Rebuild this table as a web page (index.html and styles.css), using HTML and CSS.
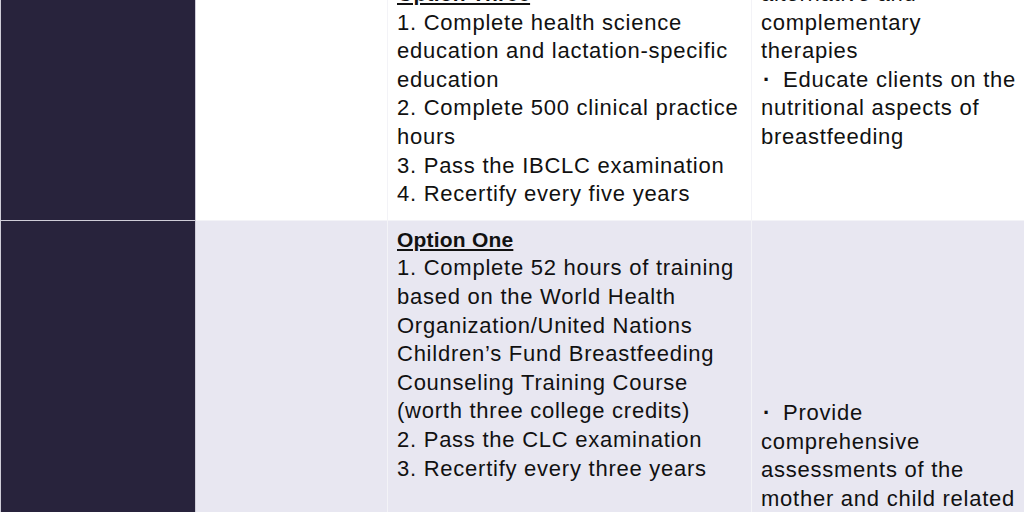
FILE: index.html
```html
<!DOCTYPE html>
<html lang="en">
<head>
<meta charset="utf-8">
<title>Lactation credentials</title>
<link rel="stylesheet" href="styles.css">
</head>
<body>
<table class="cred-table">
  <colgroup>
    <col class="col-label">
    <col class="col-name">
    <col class="col-req">
    <col class="col-scope">
  </colgroup>
  <tbody>
    <tr class="row row-light">
      <td class="cell cell-label"></td>
      <td class="cell cell-name"></td>
      <td class="cell cell-req">
        <div class="opt">Option Three</div>
        <div>1. Complete health science education and lactation-specific education</div>
        <div>2. Complete 500 clinical practice hours</div>
        <div>3. Pass the IBCLC examination</div>
        <div>4. Recertify every five years</div>
      </td>
      <td class="cell cell-scope">
        <div>alternative and complementary therapies</div>
        <div><span class="dot">·</span>Educate clients on the nutritional aspects of breastfeeding</div>
      </td>
    </tr>
    <tr class="row row-tint row-tall">
      <td class="cell cell-label"></td>
      <td class="cell cell-name"></td>
      <td class="cell cell-req">
        <div class="opt">Option One</div>
        <div>1. Complete 52 hours of training based on the World Health Organization/United Nations Children’s Fund Breastfeeding Counseling Training Course (worth three college credits)</div>
        <div>2. Pass the CLC examination</div>
        <div>3. Recertify every three years</div>
      </td>
      <td class="cell cell-scope cell-mid">
        <div><span class="dot">·</span>Provide comprehensive assessments of the mother and child related</div>
      </td>
    </tr>
  </tbody>
</table>
</body>
</html>
```

FILE: styles.css
```css
html, body {
  margin: 0;
  padding: 0;
  background: #ffffff;
  overflow: hidden;
}

.cred-table {
  width: 1024px;
  table-layout: fixed;
  border-collapse: collapse;
  margin-top: -26px;
  font-family: "Liberation Sans", Arial, sans-serif;
  font-size: 22px;
  line-height: 28.6px;
  letter-spacing: 0.75px;
  color: #111111;
}

.col-label { width: 195px; }
.col-name { width: 192px; }
.col-req { width: 364px; }
.col-scope { width: 273px; }

.cell {
  padding: 5px 9px 11px 9px;
  border: 1px solid #f3f3f7;
  vertical-align: top;
}

.cell-scope {
  padding-right: 3px;
}

.cell-label {
  background: #28233c;
  border-color: #cfcdd8;
}

.row-light .cell-name,
.row-light .cell-req,
.row-light .cell-scope {
  background: #ffffff;
}

.row-tint .cell-name,
.row-tint .cell-req,
.row-tint .cell-scope {
  background: #e8e7f1;
}

.row-tall {
  height: 478px;
}

.cell-mid {
  vertical-align: middle;
}

.dot {
  font-weight: bold;
  margin-left: 2px;
  margin-right: 12px;
}

.opt {
  font-weight: bold;
  text-decoration: underline;
  font-size: 21px;
  letter-spacing: 0.2px;
}
```
